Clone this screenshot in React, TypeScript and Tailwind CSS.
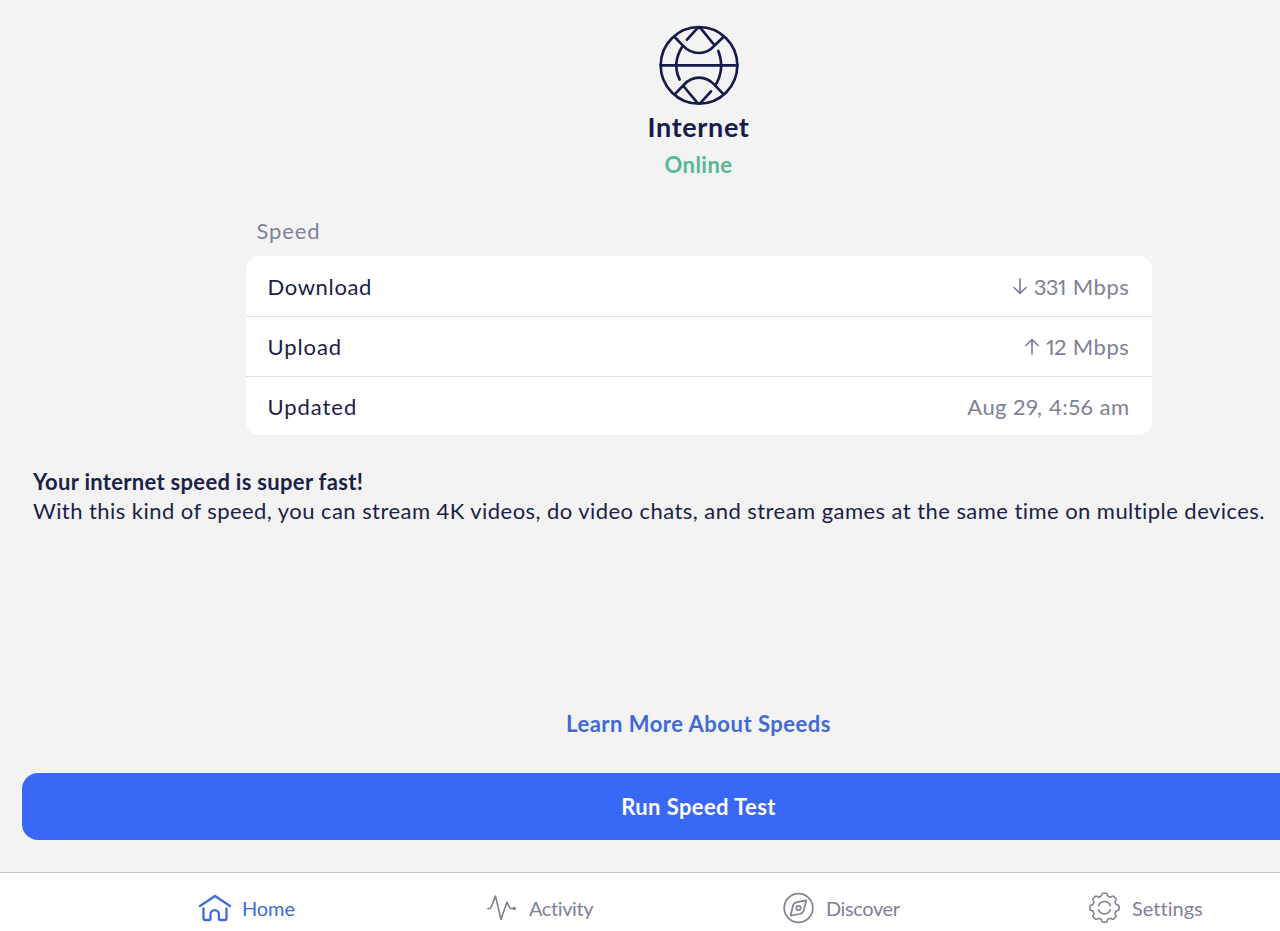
import type { ReactNode } from "react";
import clsx from "clsx";

function GlobeIcon() {
  return (
    <svg width="80" height="80" viewBox="56 30 240 240" fill="none" stroke="#151b4a" strokeWidth="8" strokeLinecap="round" strokeLinejoin="round">
      <circle cx="176" cy="151" r="115" />
      <path d="M61 151h230" />
      <path d="M103 66l25 26Q148 114 176 114T222 92l28-27" />
      <path d="M140 74l30-33Q176 35 182 41L222 90" />
      <path d="M127 93C103 130 104 165 118 194" />
      <path d="M234 108C248 145 244 180 225 211" />
      <path d="M103 238l27-28Q150 188 176 188T222 209l28 29" />
      <path d="M129 213l41 49Q176 268 182 262L212 229" />
    </svg>
  );
}

function HomeIcon() {
  return (
    <svg width="34" height="28" viewBox="0 0 34 28" fill="none" stroke="#4169d8" strokeWidth="2.3" strokeLinecap="round" strokeLinejoin="round">
      <path d="M2 12L17 2l15 10" />
      <path d="M5.5 14.5v9.8q0 1.7 1.7 1.7h3.8q1.5 0 1.5-1.5v-4.2a4.2 4.2 0 0 1 8.4 0v4.2q0 1.5 1.5 1.5h4.4q1.7 0 1.7-1.7V14.5" />
    </svg>
  );
}

function ActivityIcon() {
  return (
    <svg width="30" height="28" viewBox="0 0 30 28" fill="none" stroke="#7e8197" strokeWidth="1.6" strokeLinecap="round" strokeLinejoin="round">
      <path d="M.8 14.500h1.700Q3.500 14.500 4 13.400L8.500 2l5.500 23.500L20 8l2.700 5.600q.4.900 1.400.9H27" />
      <circle cx="27.300" cy="14.500" r=".9" fill="#7e8197" />
    </svg>
  );
}

function DiscoverIcon() {
  return (
    <svg width="32" height="32" viewBox="0 0 32 32" fill="none" stroke="#7e8197" strokeWidth="1.7" strokeLinejoin="round">
      <circle cx="15.500" cy="16" r="14.300" />
      <path d="M23.300 8.300L21 17.800Q20.200 21.300 16.700 22L7.700 23.500 9.800 14.200Q10.600 10.800 14 10.200Z" />
      <circle cx="15.500" cy="16" r="2.200" />
    </svg>
  );
}

// eight teeth, rounded at the tips and at the notches
const GEAR = Array.from({ length: 8 }, (_, i) => {
  const at = (r: number, deg: number) => {
    const a = ((i * 45 + deg - 90) * Math.PI) / 180;
    return `${(15.5 + r * Math.cos(a)).toFixed(2)} ${(15.7 + r * Math.sin(a)).toFixed(2)}`;
  };
  return `${i ? "L" : "M"}${at(14.6, -6)}L${at(14.6, 6)}Q${at(14.6, 10)} ${at(13.6, 11.5)}Q${at(12, 13.5)} ${at(12, 18)}L${at(12, 27)}Q${at(12, 31.5)} ${at(13.6, 33.5)}Q${at(14.6, 35)} ${at(14.6, 39)}`;
}).join("") + "Z";

function SettingsIcon() {
  return (
    <svg width="32" height="32" viewBox="0 0 32 32" fill="none" stroke="#7e8197" strokeWidth="1.6" strokeLinecap="round" strokeLinejoin="round">
      <path d={GEAR} />
      <path d="M9.600 13.600a6.300 6.300 0 0 1 11.800 0M21.400 17.800a6.300 6.300 0 0 1-11.800 0" />
    </svg>
  );
}

function Arrow({ up }: { up?: boolean }) {
  return (
    <svg width="14" height="17" viewBox="0 0 14 17" fill="none" stroke="#7e8197" strokeWidth="1.7" strokeLinecap="round" strokeLinejoin="round" className={clsx("mr-[7px]", up && "rotate-180")}>
      <path d="M7 1v14.500M1 9.500l6 6 6-6" />
    </svg>
  );
}

function Row({ label, className, children }: { label: string; className: string; children: ReactNode }) {
  return (
    <div className={clsx("flex items-center justify-between border-b border-[#e1e1e4] px-[22px] text-[22px] last:border-b-0", className)}>
      <span className="text-[#1b2148]">{label}</span>
      <span className="flex items-center whitespace-pre text-[#7e8197] proportional-nums">{children}</span>
    </div>
  );
}

const TABS = [
  { label: "Home", icon: <HomeIcon />, box: "w-[289px] gap-[10px]", text: "tracking-[-0.1px]" },
  { label: "Activity", icon: <ActivityIcon />, box: "w-[296px] gap-[12px]", text: "tracking-[-0.4px]" },
  { label: "Discover", icon: <DiscoverIcon />, box: "w-[306px] gap-[11px]", text: "tracking-[-0.4px]" },
  { label: "Settings", icon: <SettingsIcon />, box: "w-[300px] gap-[11px]", text: "tracking-[0.02px]" },
];

export default function App() {
  return (
    <div className="h-[931px] w-full overflow-hidden bg-[#f3f3f3] font-['Lato','Noto_Sans',sans-serif]">
      <div className="flex h-full w-[1397px] flex-col">
        <header className="flex h-[212px] flex-col items-center pt-[25px]">
          <GlobeIcon />
          <h1 className="mt-[4px] text-[27px] leading-[36px] font-bold tracking-[0.65px] text-[#151b4a]">Internet</h1>
          <p className="mt-[5px] text-[22px] leading-[30px] font-bold tracking-[0.5px] text-[#58b795]">Online</p>
        </header>

        <section className="mx-auto w-[906px]">
          <h2 className="h-[44px] pl-[11px] text-[22px] leading-[37px] tracking-[0.9px] text-[#7e8197]">Speed</h2>
          <div className="h-[179px] overflow-hidden rounded-[14px] bg-white">
            <Row label="Download" className="h-[61px] tracking-[0.65px]">
              <Arrow /><span className="mr-[2px] tracking-[-0.7px]">331 </span><span className="tracking-[0.6px]">Mbps</span>
            </Row>
            <Row label="Upload" className="h-[60px] tracking-[0.9px]">
              <Arrow up /><span className="mr-[2px] tracking-[-0.7px]">12 </span><span className="tracking-[0.6px]">Mbps</span>
            </Row>
            <Row label="Updated" className="h-[58px] tracking-[0.95px]">
              <span className="tracking-[0.45px]">Aug 29, 4:56 am</span>
            </Row>
          </div>
        </section>

        <div className="mt-[33px] pl-[33px] text-[22px] whitespace-nowrap text-[#1b2148]">
          <p className="leading-[28px] font-bold tracking-[0.3px]">Your internet speed is super fast!</p>
          <p className="leading-[29px] tracking-[0.445px]">
            With this kind of speed, you can stream 4K videos, do video chats, and stream games at the same time on multiple devices.
          </p>
        </div>

        <div className="mt-auto flex flex-col px-[22px] pb-[32px]">
          <button className="mb-[34px] self-center text-[22px] leading-[30px] font-bold tracking-[0.5px] text-[#4169d8]">
            Learn More About Speeds
          </button>
          <button className="h-[67px] rounded-[16px] bg-[#3968f6] text-[22px] font-bold tracking-[0.4px] text-white">
            Run Speed Test
          </button>
        </div>

        <nav className="flex h-[59px] shrink-0 border-t border-[#c4c4c6] bg-white pl-[198px]">
          {TABS.map(({ label, icon, box, text }, i) => (
            <button
              key={label}
              className={clsx("flex h-[70px] shrink-0 items-center text-[20px]", box, i === 0 ? "text-[#4169d8]" : "text-[#7e8197]")}
            >
              {icon}
              <span className={text}>{label}</span>
            </button>
          ))}
        </nav>
      </div>
    </div>
  );
}
